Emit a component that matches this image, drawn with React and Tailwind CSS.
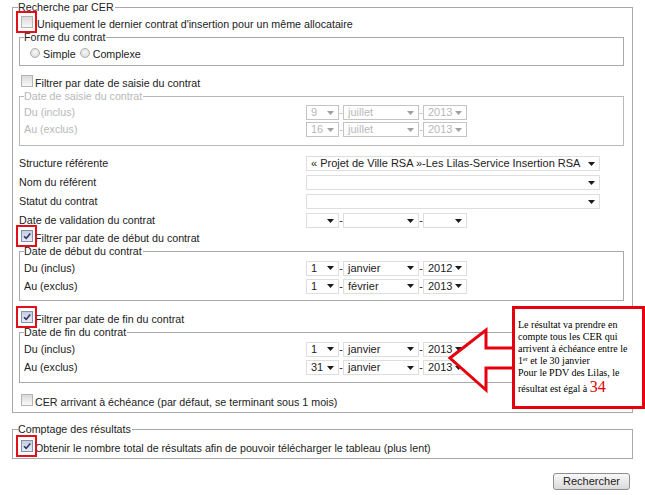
import React from "react";

const Tri = ({ disabled }) => (
  <svg width="7" height="4" viewBox="0 0 7 4" className="shrink-0">
    <polygon points="0,0 7,0 3.5,4" fill={disabled ? "#a0a0a0" : "#1a1a1a"} />
  </svg>
);

const Sel = ({ w, text = "", disabled }) => (
  <div
    className={`${w} h-[15px] flex items-center justify-between border bg-white pl-[4px] pr-[4px] text-[11px] ${
      disabled ? "border-[#c4c4c4] text-[#b8b8b8]" : "border-[#dedede] text-[#222]"
    }`}
  >
    <span className="whitespace-nowrap leading-[13px]">{text}</span>
    <Tri disabled={disabled} />
  </div>
);

const DateSel = ({ d = "", m = "", y = "", disabled }) => (
  <div className={`flex items-center ${disabled ? "text-[#b8b8b8]" : "text-[#222]"}`}>
    <Sel w="w-[33px]" text={d} disabled={disabled} />
    <span className="w-[4px] text-center leading-[13px]">-</span>
    <Sel w="w-[76px]" text={m} disabled={disabled} />
    <span className="w-[4px] text-center leading-[13px]">-</span>
    <Sel w="w-[44px]" text={y} disabled={disabled} />
  </div>
);

const CB = ({ checked, red }) => (
  <span className="relative inline-block w-[12px] h-[12px] shrink-0">
    <span
      className={`block w-full h-full border ${
        checked
          ? "border-[#8391ad] bg-[linear-gradient(#c4cde0,#e8ecf4)]"
          : "border-[#b4b4b4] bg-[linear-gradient(#dadada,#f8f8f8)]"
      }`}
    >
      {checked && (
        <svg width="10" height="10" viewBox="0 0 10 10" className="block">
          <path d="M2 5.2 L4.2 7.4 L8.2 2.4" fill="none" stroke="#2b3560" strokeWidth="1.6" />
        </svg>
      )}
    </span>
    {red && (
      <span className="absolute left-[-5px] top-[-5px] w-[21px] h-[22px] border-2 border-[#e3101a]" />
    )}
  </span>
);

const Radio = () => (
  <span className="inline-block w-[10px] h-[10px] rounded-full border border-[#acacac] bg-[radial-gradient(circle_at_50%_40%,#f8f8f8,#d4d4d4)] shrink-0" />
);

export default function App() {
  return (
    <div className="relative w-[645px] h-[495px] bg-white overflow-hidden font-['Liberation_Sans',Arial,sans-serif] text-[10.7px] text-[#222]">
      <fieldset className="ml-[12px] w-[621px] border border-[#a9a9a9] pl-[6px] pr-[8px] pb-[1px]">
        <legend className="-ml-[1px] pr-[1px] leading-[14px]">Recherche par CER</legend>

        <div className="mt-[2px] h-[16px] flex items-center">
          <span className="ml-[2px]"><CB red /></span>
          <span className="ml-[4px]">Uniquement le dernier contrat d'insertion pour un même allocataire</span>
        </div>

        <fieldset className="border border-[#a9a9a9] pl-[4px]">
          <legend className="leading-[10px] pr-[1px]">Forme du contrat</legend>
          <div className="mt-[2px] h-[21px] flex items-center">
            <span className="ml-[6px]"><Radio /></span>
            <span className="ml-[3px]">Simple</span>
            <span className="ml-[4px]"><Radio /></span>
            <span className="ml-[3px]">Complexe</span>
          </div>
        </fieldset>

        <div className="mt-[10px] h-[15px] flex items-center">
          <span className="ml-[2px]"><CB /></span>
          <span className="ml-[2px]">Filtrer par date de saisie du contrat</span>
        </div>

        <fieldset className="border border-[#b8b8b8] pl-[4px] pb-[7px] text-[#b8b8b8]">
          <legend className="leading-[10px] pr-[1px]">Date de saisie du contrat</legend>
          <div className="mt-[3px] h-[17px] flex items-center">
            <span className="w-[282px]">Du (inclus)</span>
            <DateSel d="9" m="juillet" y="2013" disabled />
          </div>
          <div className="h-[17px] flex items-center">
            <span className="w-[282px]">Au (exclus)</span>
            <DateSel d="16" m="juillet" y="2013" disabled />
          </div>
        </fieldset>

        <div className="mt-[8px] h-[19px] flex items-center">
          <span className="w-[287px]">Structure référente</span>
          <Sel w="w-[294px]" text="« Projet de Ville RSA »-Les Lilas-Service Insertion RSA" />
        </div>
        <div className="h-[19px] flex items-center">
          <span className="w-[287px]">Nom du référent</span>
          <Sel w="w-[294px]" />
        </div>
        <div className="h-[19px] flex items-center">
          <span className="w-[287px]">Statut du contrat</span>
          <Sel w="w-[294px]" />
        </div>
        <div className="h-[19px] flex items-center">
          <span className="w-[287px]">Date de validation du contrat</span>
          <DateSel />
        </div>

        <div className="mt-[1px] h-[15px] flex items-center">
          <span className="ml-[2px]"><CB checked red /></span>
          <span className="ml-[2px]">Filtrer par date de début du contrat</span>
        </div>

        <fieldset className="border border-[#a9a9a9] pl-[4px] pb-[5px]">
          <legend className="leading-[10px] pr-[1px]">Date de début du contrat</legend>
          <div className="mt-[3px] h-[18px] flex items-center">
            <span className="w-[282px]">Du (inclus)</span>
            <DateSel d="1" m="janvier" y="2012" />
          </div>
          <div className="h-[18px] flex items-center">
            <span className="w-[282px]">Au (exclus)</span>
            <DateSel d="1" m="février" y="2013" />
          </div>
        </fieldset>

        <div className="mt-[11px] h-[15px] flex items-center">
          <span className="ml-[2px]"><CB checked red /></span>
          <span className="ml-[2px]">Filtrer par date de fin du contrat</span>
        </div>

        <fieldset className="border border-[#a9a9a9] pl-[4px] pb-[5px]">
          <legend className="leading-[10px] pr-[1px]">Date de fin du contrat</legend>
          <div className="mt-[3px] h-[18px] flex items-center">
            <span className="w-[282px]">Du (inclus)</span>
            <DateSel d="1" m="janvier" y="2013" />
          </div>
          <div className="h-[19px] flex items-center">
            <span className="w-[282px]">Au (exclus)</span>
            <DateSel d="31" m="janvier" y="2013" />
          </div>
        </fieldset>

        <div className="mt-[11px] h-[17px] flex items-center">
          <span className="ml-[2px]"><CB /></span>
          <span className="ml-[2px]">CER arrivant à échéance (par défaut, se terminant sous 1 mois)</span>
        </div>
      </fieldset>

      <fieldset className="mt-[11px] ml-[12px] w-[621px] border border-[#a9a9a9] pl-[6px]">
        <legend className="-ml-[1px] pr-[1px] leading-[10px]">Comptage des résultats</legend>
        <div className="mt-[5px] h-[19px] flex items-center">
          <span className="ml-[2px]"><CB checked red /></span>
          <span className="ml-[2px]">Obtenir le nombre total de résultats afin de pouvoir télécharger le tableau (plus lent)</span>
        </div>
      </fieldset>

      <div className="mt-[14px] w-[630px] flex justify-end">
        <button className="w-[77px] h-[17px] border border-[#8e8e8e] rounded-[3px] bg-[linear-gradient(#f8f8f8,#dadada)] text-[11px] leading-[15px] text-[#222]">
          Rechercher
        </button>
      </div>

      <svg className="absolute left-[446px] top-[326px]" width="72" height="68" viewBox="0 0 72 68">
        <polygon
          points="4,32 40,4 40,22 70,22 70,42 40,42 40,64"
          fill="white"
          stroke="#e6000e"
          strokeWidth="3"
          strokeLinejoin="miter"
        />
      </svg>

      <div className="absolute left-[512px] top-[306px] w-[133px] h-[103px] border-[3px] border-[#e6000e] bg-white pl-[3px] pt-[10px] font-['Liberation_Serif',serif] text-[10px] leading-[12px] text-black whitespace-nowrap">
        <div>Le résultat va prendre en</div>
        <div>compte tous les CER qui</div>
        <div>arrivent à échéance entre le</div>
        <div>
          1<sup className="text-[6px]">er</sup> et le 30 janvier
        </div>
        <div>Pour le PDV des Lilas, le</div>
        <div className="leading-[16px]">
          résultat est égal à <span className="text-[16px] leading-[16px] text-[#e00000]">34</span>
        </div>
      </div>
    </div>
  );
}
